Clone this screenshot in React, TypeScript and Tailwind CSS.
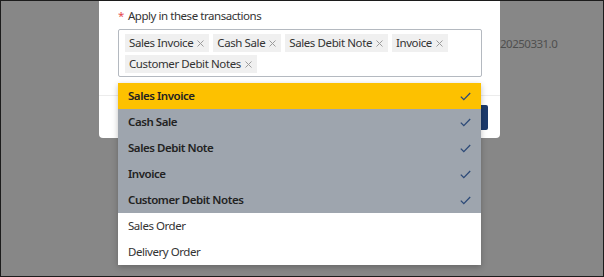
import React from "react";

const tags = ["Sales Invoice", "Cash Sale", "Sales Debit Note", "Invoice", "Customer Debit Notes"];

const options = [
  { label: "Sales Invoice", selected: true, active: true },
  { label: "Cash Sale", selected: true },
  { label: "Sales Debit Note", selected: true },
  { label: "Invoice", selected: true },
  { label: "Customer Debit Notes", selected: true },
  { label: "Sales Order", selected: false },
  { label: "Delivery Order", selected: false },
];

function Check() {
  return (
    <svg width="11" height="9" viewBox="0 0 11 9" fill="none">
      <polyline points="0.8,4.6 3.8,7.6 10.2,1" stroke="#2d4a78" strokeWidth="1.3" />
    </svg>
  );
}

function Close() {
  return (
    <svg width="7" height="7" viewBox="0 0 7 7" fill="none">
      <path d="M0.5 0.5L6.5 6.5M6.5 0.5L0.5 6.5" stroke="#9c9c9c" strokeWidth="1" />
    </svg>
  );
}

function Tag({ label }: { label: string }) {
  return (
    <span className="flex h-[18px] items-center gap-[4px] bg-[#f0f0f0] pl-[4px] pr-[5px] text-[11.5px] tracking-[-0.4px] text-[#333]">
      {label}
      <Close />
    </span>
  );
}

export default function App() {
  return (
    <div
      className="relative h-[277px] w-[604px] overflow-hidden border border-[#1c1c1c] bg-[#878787] text-[11px]"
      style={{ fontFamily: '"Noto Sans", "Open Sans", sans-serif' }}
    >
      {/* page text behind the overlay */}
      <span className="absolute left-[499px] top-[34px] text-[11.5px] tracking-[-0.5px] text-[#4f4f4f]">20250331.0</span>

      {/* modal */}
      <div className="absolute left-[98px] top-[-20px] flex h-[157px] w-[401px] flex-col rounded-[4px] bg-white">
        <div className="px-[19px] pt-[27px]">
          <div className="flex items-center gap-[4px] text-[11.5px] leading-[16px] tracking-[-0.45px] text-[#333]">
            <span className="text-[#e5484d]">*</span>
            <span>Apply in these transactions</span>
          </div>
          <div className="mt-[5px] flex h-[48px] w-[364px] flex-wrap content-start gap-x-[4px] gap-y-[3px] rounded-[2px] border border-[#b4b9c0] px-[6px] pt-[4px]">
            {tags.map((t) => (
              <Tag key={t} label={t} />
            ))}
          </div>
        </div>
        <div className="mt-[18px] flex flex-1 justify-end border-t border-[#ececec] px-[12px] pt-[9px]">
          <div className="h-[25px] w-[70px] rounded-[2px] bg-[#1c3a6c]" />
        </div>
      </div>

      {/* dropdown */}
      <div className="absolute left-[117px] top-[82px] w-[363px] bg-white shadow-[0_2px_6px_rgba(0,0,0,0.25)]">
        {options.map((o) => (
          <div
            key={o.label}
            className={
              "flex h-[26px] items-center justify-between pl-[10px] pr-[10px] text-[11.5px] tracking-[-0.45px] " +
              (o.active
                ? "bg-[#fdc100] font-semibold text-[#222]"
                : o.selected
                  ? "bg-[#9ea5ae] font-semibold text-[#222]"
                  : "bg-white text-[#333]")
            }
          >
            <span>{o.label}</span>
            {o.selected && <Check />}
          </div>
        ))}
      </div>
    </div>
  );
}
